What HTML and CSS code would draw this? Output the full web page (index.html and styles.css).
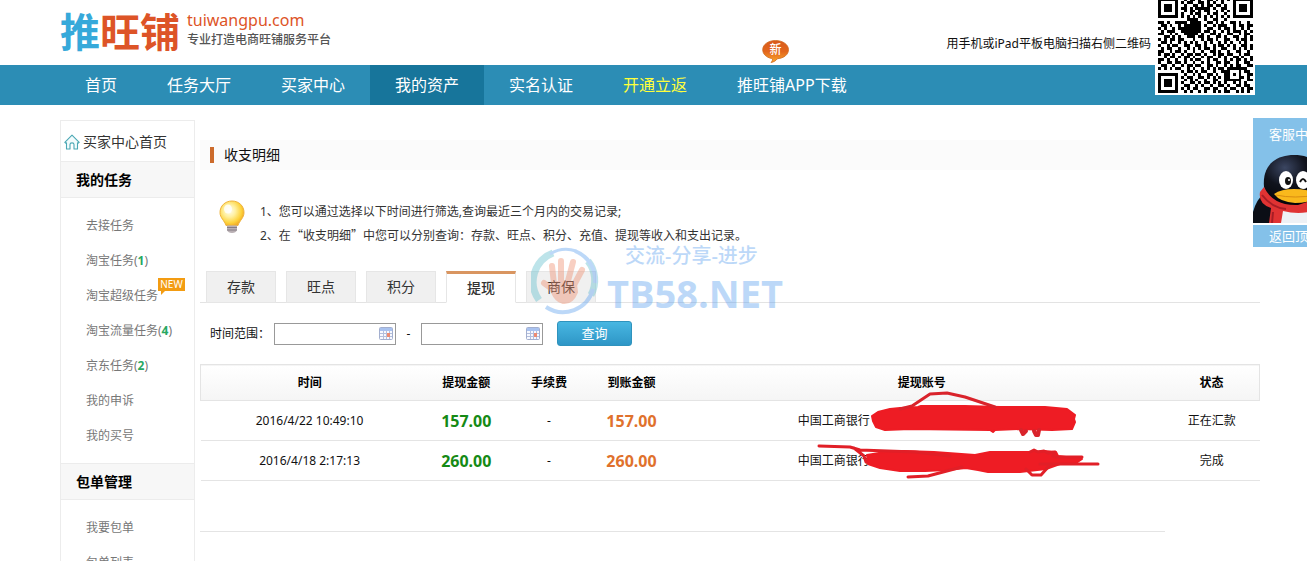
FILE: index.html
```html
<!DOCTYPE html>
<html lang="zh-CN">
<head>
<meta charset="utf-8">
<title>收支明细 - 推旺铺</title>
<link rel="stylesheet" href="styles.css">
</head>
<body>
<header class="top">
  <div class="logo">
    <span class="logo-name"><span class="logo-blue">推</span>旺铺</span>
    <span class="logo-side"><span class="logo-domain">tuiwangpu.com</span><span class="logo-slogan">专业打造电商旺铺服务平台</span></span>
  </div>
  <p class="scan">用手机或iPad平板电脑扫描右侧二维码</p>
  <div class="qr"><svg id="qr" viewBox="0 0 33 33" role="img" aria-label="二维码" shape-rendering="crispEdges"></svg></div>
</header>
<nav class="nav">
  <a href="#">首页</a>
  <a href="#">任务大厅</a>
  <a href="#">买家中心</a>
  <a href="#" class="on">我的资产</a>
  <a href="#">实名认证</a>
  <a href="#" class="hot">开通立返</a>
  <a href="#" class="app">推旺铺APP下载
    <span class="new-bubble">
      <svg viewBox="0 0 27 23" aria-hidden="true"><defs><linearGradient id="ob" x2="0" y2="1"><stop offset="0" stop-color="#d95a1c"/><stop offset=".5" stop-color="#e2661c"/><stop offset="1" stop-color="#fba82c"/></linearGradient></defs><path d="M13.500.5C6.500.500.700 4.500.700 9.700c0 4.300 3.500 7.600 8.800 8.800 1.500.5 1.500 2-.5 4 3-.5 5-2 6.500-3.800 6.500-.5 11-4.200 11-9C26.500 4.500 20.700.5 13.500.5z" fill="url(#ob)" stroke="#cf6a20" stroke-width=".8"/></svg>
      <b>新</b>
    </span>
  </a>
</nav>
<div class="page">
  <aside class="side">
    <a class="home" href="#"><svg viewBox="0 0 16 16" aria-hidden="true"><path d="M.8 8.300 8 1.200l7.200 7.100-1.200.9-.5-.4V15H10v-4.500C10 8.300 6 8.300 6 10.500V15H2.500V8.800l-.6.400z" fill="#f2fbfc" stroke="#4aa7b4" stroke-width="1.100" stroke-linejoin="round"/></svg>买家中心首页</a>
    <h2>我的任务</h2>
    <ul>
      <li><a href="#">去接任务</a></li>
      <li><a href="#">淘宝任务(<b>1</b>)</a></li>
      <li><a href="#" class="super">淘宝超级任务<span class="new-tag">NEW</span></a></li>
      <li><a href="#">淘宝流量任务(<b>4</b>)</a></li>
      <li><a href="#">京东任务(<b>2</b>)</a></li>
      <li><a href="#">我的申诉</a></li>
      <li><a href="#">我的买号</a></li>
    </ul>
    <h2>包单管理</h2>
    <ul>
      <li><a href="#">我要包单</a></li>
      <li><a href="#">包单列表</a></li>
    </ul>
  </aside>
  <main class="main">
    <h1>收支明细</h1>
    <div class="tip">
      <svg class="bulb" viewBox="0 0 26 34" aria-hidden="true"><defs><radialGradient id="bg" cx=".4" cy=".4" r=".62"><stop offset="0" stop-color="#fffef0"/><stop offset=".4" stop-color="#fff0a0"/><stop offset=".8" stop-color="#fdd23a"/><stop offset="1" stop-color="#f2ae28"/></radialGradient></defs><path d="M13 1C6 1 1 6 1 12.500c0 5.500 4.500 8 6 13h12c1.500-5 6-7.500 6-13C25 6 20 1 13 1z" fill="url(#bg)" stroke="#efb23c" stroke-width="1"/><ellipse cx="9" cy="9" rx="4" ry="4.500" fill="#fff" opacity=".8"/><path d="M8 25.500h10v4.500q-1 3-5 3t-5-3z" fill="#b9b0b4"/><path d="M8 27.500h10M8 30h10" stroke="#857c84" stroke-width="1"/></svg>
      <div>
        <p>1、您可以通过选择以下时间进行筛选,查询最近三个月内的交易记录;</p>
        <p>2、在<span class="cjk">“</span>收支明细<span class="cjk">”</span>中您可以分别查询：存款、旺点、积分、充值、提现等收入和支出记录。</p>
      </div>
    </div>
    <div class="tabs">
      <button type="button">存款</button>
      <button type="button">旺点</button>
      <button type="button">积分</button>
      <button type="button" class="on">提现</button>
      <button type="button">商保</button>
      <div class="watermark" aria-hidden="true">
        <svg viewBox="0 0 68 68"><g fill="none"><path d="M22 6A31 31 0 0 0 8 53" stroke="#5cbccb" stroke-width="7"/><path d="M19 7A31 31 0 0 1 45 4" stroke="#5a9ff0" stroke-width="3"/><path d="M57 14A31 31 0 0 1 60 48" stroke="#5cbccb" stroke-width="7"/><path d="M44 4A31 31 0 0 1 64 36" stroke="#5a9ff0" stroke-width="4"/><path d="M62 42A31 31 0 0 1 15 60" stroke="#5a9ff0" stroke-width="4"/></g><g stroke="#ee8a68" stroke-linecap="round" stroke-width="6" fill="#ee8a68"><path d="M23 37 21 19M30 34 30 14M37 34 42 15M43 38 51 23M24 44 13 36"/><path d="M23 37 43 37 44 45Q40 55 32 54 26 52 23 45z"/></g></svg>
        <div class="wm-text"><span class="wm-small">交流-分享-进步</span><span class="wm-big">TB58.NET</span></div>
      </div>
    </div>
    <form class="filter">
      <label for="from">时间范围：</label>
      <span class="date"><input id="from" type="text"><svg viewBox="0 0 14 13" aria-hidden="true"><use href="#cal"/></svg></span>
      <span class="dash">-</span>
      <span class="date"><input id="to" type="text" aria-label="结束时间"><svg viewBox="0 0 14 13" aria-hidden="true"><g id="cal"><rect x=".5" y=".5" width="13" height="12" rx="1" fill="#f7f9ff" stroke="#a3afcf"/><path d="M1 1h12v3H1z" fill="#a9c2ef"/><path d="M1 6.500h12M1 9.500h12M4.500 4v8M7.500 4v8M10.500 4v8" stroke="#b4bfdc"/><path d="M8 6h3v4H8z" fill="#ec8b72"/></g></svg></span>
      <button type="button">查询</button>
    </form>
    <table>
      <colgroup><col class="c-time"><col class="c-amt"><col class="c-fee"><col class="c-amt"><col><col class="c-state"></colgroup>
      <thead><tr><th>时间</th><th>提现金额</th><th>手续费</th><th>到账金额</th><th>提现账号</th><th>状态</th></tr></thead>
      <tbody>
        <tr><td>2016/4/22 10:49:10</td><td class="green">157.00</td><td>-</td><td class="orange">157.00</td>
          <td><span class="account">中国工商银行<svg viewBox="870 401 176 39" aria-hidden="true"><path d="M872 416 878 412 890 409 900 408 918 407 921 406 965 406 1000 407 1045 407 1067 409 1075 415 1074 419 1075 422 1072 429 1052 430 1020 429 995 430 993 432 990 430 910 429 885 430 876 427 873 421z" fill="#ee1c24" stroke="#ee1c24" stroke-width="2" stroke-linejoin="round"/><path d="m900 409 12-3 18-12 17-1 18 4 30 10" fill="none" stroke="#d9232b" stroke-width="3" stroke-linejoin="round" stroke-linecap="round"/><path d="M1021 430l2 4 3-3M1034 431l2 4h2l1-5" fill="none" stroke="#d9232b" stroke-width="4" stroke-linejoin="round" stroke-linecap="round"/></svg></span></td><td>正在汇款</td></tr>
        <tr><td>2016/4/18 2:17:13</td><td class="green">260.00</td><td>-</td><td class="orange">260.00</td>
          <td><span class="account">中国工商银行<svg viewBox="870 441 176 39" aria-hidden="true"><path d="M867 455 885 452 904 451 934 452 975 455 990 452 1032 452 1044 451 1056 452 1058 456 1082 459 1076 463 1060 464 1046 469 1020 472 988 472 978 470 966 468 946 470 925 471 900 471 880 468 868 464z" fill="#ee1c24" stroke="#ee1c24" stroke-width="2" stroke-linejoin="round"/><path d="m819 446 31 1 10 3 55 2 35 4M854 448l10 8 2 6M908 477l20-1 34-9M1026 469l6 6h9l9-10M1056 457h26M1040 464h58M1030 452l4-2 4 2 6-1 4 2 7-1-2 4" fill="none" stroke="#e11f27" stroke-width="3" stroke-linejoin="round" stroke-linecap="round"/></svg></span></td><td>完成</td></tr>
      </tbody>
    </table>
    <hr>
  </main>
</div>
<aside class="service">
  <div class="service-in">
    <a href="#">客服中心</a>
    <svg viewBox="0 0 72 73" aria-hidden="true"><defs><radialGradient id="hd" cx=".35" cy=".25" r=".7"><stop offset="0" stop-color="#3b4662"/><stop offset=".5" stop-color="#10131d"/><stop offset="1" stop-color="#05060a"/></radialGradient></defs><path d="M0 73V62Q3 50 12 42L62 44 72 62V73z" fill="#0b0e16"/><path d="M28 55h34v18H28z" fill="#eef1f5"/><path d="M11 37C9 15 23 5 41 5s30 9 30 30Q66 56 40 56 16 54 11 37z" fill="url(#hd)"/><path d="M7 42 11 37Q20 56 45 55l25-8v11q-20 8-40 3l-2 12H16l2-15Q5 54 7 42z" fill="#e03333"/><path d="M9 45q10 13 24 14M20 62l-1 11" fill="none" stroke="#a71d25" stroke-width="2"/><ellipse cx="33" cy="30" rx="7" ry="9" fill="#fff"/><ellipse cx="50" cy="30" rx="7" ry="9" fill="#fff"/><ellipse cx="35" cy="31" rx="3" ry="4" fill="#111"/><circle cx="36" cy="30" r="1" fill="#fff"/><path d="m47 32q3-6 6 0" fill="none" stroke="#111" stroke-width="2"/><path d="M21 44q7-5 20-5t25 5q-6 9-24 9-15-1-21-9z" fill="#f9b91c"/><path d="M23 45q18 4 41 0" fill="none" stroke="#d98d10"/></svg>
    <a class="to-top" href="#">返回顶部</a>
  </div>
</aside>
<script src="qr.js"></script>
</body>
</html>
```

FILE: styles.css
```css
* { box-sizing: border-box; }
body { margin: 0; font: 12px/24px "Noto Sans", "Noto Sans CJK SC", sans-serif; color: #222; background: #fff; }
a { color: inherit; text-decoration: none; }
p, h1, h2, ul { margin: 0; padding: 0; }
ul { list-style: none; }
button, input { font: inherit; }

.top { position: relative; display: flex; justify-content: space-between; height: 65px; padding: 0 156px 0 60px; }
.logo { display: flex; gap: 6px; padding-top: 10px; }
.logo-name { font: 700 40px/40px "Noto Sans CJK SC", sans-serif; color: #dd5427; }
.logo-blue { color: #36a9da; }
.logo-side { display: flex; flex-direction: column; padding-left: 1px; }
.logo-domain { font-size: 16px; line-height: 20px; color: #dd5427; }
.logo-slogan { font-weight: 500; line-height: 20px; color: #555; }
.scan { padding-top: 32px; color: #111; }
.qr { position: absolute; top: 0; right: 52px; width: 100px; height: 95px; padding: 0 3px; background: #fff; overflow: hidden; z-index: 2; }
.qr svg { display: block; width: 95px; height: 95px; margin-top: -2px; }

.nav { display: flex; padding-left: 60px; background: #2c8db5; }
.nav a { padding: 0 25px; font-size: 16px; line-height: 40px; color: #fff; }
.nav .on { background: #17759b; }
.nav .hot { color: #ffff3c; }
.app { position: relative; }
.new-bubble { position: absolute; left: 50px; top: -25px; width: 27px; height: 23px; }
.new-bubble svg { position: absolute; inset: 0; }
.new-bubble b { position: relative; display: block; text-align: center; font-size: 12px; font-weight: 500; line-height: 19px; }

.page { display: flex; gap: 5px; padding: 15px 47px 0 60px; }
.side { flex: none; width: 135px; border: 1px solid #ececec; }
.home { display: flex; align-items: center; gap: 3px; height: 40px; padding: 2px 0 0 3px; font-size: 14px; color: #333; }
.home svg { width: 16px; height: 16px; }
.side h2 { height: 37px; padding-left: 15px; border: solid #ececec; border-width: 1px 0; background: #f7f7f7; font-size: 14px; line-height: 36px; color: #000; }
.side ul { padding: 10px 0 10px 25px; }
.side li { line-height: 35px; color: #777; white-space: nowrap; }
.side li b { color: #27a862; }
.super { position: relative; }
.new-tag { position: absolute; left: 72px; top: -9px; width: 27px; height: 13px; background: #f39c12; color: #fff; font-size: 10px; line-height: 13px; text-align: center; }
.new-tag::after { content: ""; position: absolute; left: 3px; top: 13px; border: solid transparent; border-width: 4px 4px 0 0; border-top-color: #f39c12; }

.main { flex: 1; min-width: 0; padding-top: 20px; }
.main h1 { display: flex; align-items: center; gap: 10px; height: 30px; padding-left: 10px; background: #fbfbfb; font-size: 14px; font-weight: 400; color: #111; }
.main h1::before { content: ""; width: 4px; height: 16px; background: #cc6b2c; }
.tip { display: flex; gap: 15px; padding: 30px 0 0 19px; color: #333; }
.bulb { width: 26px; height: 34px; }
.cjk { font-family: "Noto Sans CJK SC", sans-serif; line-height: 1; }

.tabs { position: relative; display: flex; gap: 10px; height: 32px; margin-top: 23px; padding-left: 6px; border-bottom: 1px solid #e3e3e3; }
.tabs button { width: 70px; height: 32px; padding: 0; border: 1px solid #e6e6e6; background: #f0f0f0; font-size: 14px; line-height: 30px; color: #333; }
.tabs .on { border-top: 3px solid #d99560; border-bottom-color: #fff; background: #fff; font-weight: 500; line-height: 28px; }
.watermark { position: absolute; left: 331px; top: -24px; display: flex; gap: 8px; opacity: .4; pointer-events: none; color: #5a9ff0; }
.watermark svg { width: 68px; height: 68px; }
.wm-text { display: flex; flex-direction: column; white-space: nowrap; }
.wm-small { padding-left: 18px; font-size: 20px; font-weight: 500; line-height: 18px; }
.wm-big { font-size: 38px; font-weight: 700; line-height: 56px; font-family: "Open Sans", sans-serif; }

.filter { display: flex; align-items: center; margin-top: 18px; padding-left: 10px; height: 25px; color: #111; }
.filter label { width: 64px; white-space: nowrap; }
.date { position: relative; width: 122px; height: 22px; }
.date input { display: block; width: 100%; height: 22px; padding: 0 20px 0 4px; border: 1px solid #999; background: #fff; }
.date svg { position: absolute; right: 3px; top: 4px; width: 14px; height: 13px; }
.dash { width: 25px; text-align: center; }
.filter button { width: 75px; height: 25px; margin-left: 14px; padding: 0; border: 1px solid #2f93bd; border-radius: 3px; background: linear-gradient(#48b7e2, #2e96c6); font-size: 13px; line-height: 23px; color: #fff; }

table { width: 100%; margin-top: 18px; table-layout: fixed; border-collapse: collapse; text-align: center; color: #111; }
.c-time { width: 20.6%; }
.c-amt { width: 9%; }
.c-fee { width: 6.6%; }
.c-state { width: 9%; }
thead tr { border: 1px solid #e4e4e4; background: linear-gradient(#fff, #f5f5f5); }
th { height: 36px; padding: 0; font-weight: 700; color: #000; }
td { height: 40px; padding: 0; border-bottom: 1px solid #e4e4e4; }
.green, .orange { font-size: 16px; font-weight: 700; }
.green { color: #158a15; }
.orange { color: #e0712c; }
.account { display: flex; align-items: center; justify-content: center; height: 39px; white-space: nowrap; }
.account svg { flex: none; width: 176px; height: 39px; overflow: visible; position: relative; }
hr { width: 91%; margin: 50px 0 0; border: 0; border-top: 1px solid #e4e4e4; }

.service { position: fixed; right: 0; top: 118px; width: 54px; overflow: hidden; background: #84c1e9; }
.service-in { display: flex; flex-direction: column; width: 84px; }
.service a { padding-left: 16px; font-size: 13px; line-height: 32px; color: #fff; }
.service svg { width: 72px; height: 73px; }
.service .to-top { border-top: 2px solid #fff; line-height: 22px; }
```

FILE: qr.js
```javascript
const rows = [
  "#######..#.##.#..##.#.#.#.#######",
  "#.....#.#.##..##.#.#..#...#.....#",
  "#.###.#..#..##.#.##.##.#..#.###.#",
  "#.###.#.##.#.#####.#..##..#.###.#",
  "#.###.#..#.##.#.##..#.#.#.#.###.#",
  "#.....#.#..#.##..#.##..#..#.....#",
  "#######.#.#.#.#.#.#.#.#.#.#######",
  "..........####..#..##..#.........",
  "##.#..####.####..##.#.#..##.#..#.",
  ".##.#..#.######.#..#.###..#.##.##",
  "#.#..#.########..##..#.##.#..#.#.",
  ".#.###..#######.##.#..#.#.###.#.#",
  "##..#.#..#####.#..##.#..##..#.##.",
  "..##.#.#..###.##.#..##.#..##..#.#",
  "#.#.##.##...#..#.##.#..##..#.##.#",
  ".##.#..#.#.#.#..#.#..#.#.#..#.#..",
  "#..#.##..##..##.#..#.##.#.#..##.#",
  ".#.##..#..#.#.#.##.#..##..#.#.#.#",
  "##..#.##.#..#..#..##.#..#..##..#.",
  "#.##.#..#.##.##.#..#.##.##..#.##.",
  "..#.##.#.##.#..#.##..#.#..##.#..#",
  "##.#..#..#.#.##..#.##..#.#.##.#.#",
  "#..##.##.#..#..#.#..##.##..#..##.",
  ".##..#..#.##.##..##.#..#.#.##..##",
  "#.#.#.##..#.#..#.#.#.##.#######..",
  "........#.##.#.##..#..###...#.##.",
  "#######..#..#.#..##.#..##.#.#..##",
  "#.....#.#.##..##.#.#.#.##...##.#.",
  "#.###.#..#.#.#..#..##..######..##",
  "#.###.#.#..##.#.##.#.#.#..#.#.#..",
  "#.###.#..##..#.#..#..##.#..##.##.",
  "#.....#.#.#.##..##.##..#.##..#.##",
  "#######..#.#..#.#..#.#.##..#.#.#."
];
let d = "";
rows.forEach((row, y) => {
  for (const run of row.matchAll(/#+/g)) {
    d += `M${run.index} ${y}h${run[0].length}v1h-${run[0].length}z`;
  }
});
const path = document.createElementNS("http://www.w3.org/2000/svg", "path");
path.setAttribute("d", d);
document.getElementById("qr").append(path);
```
